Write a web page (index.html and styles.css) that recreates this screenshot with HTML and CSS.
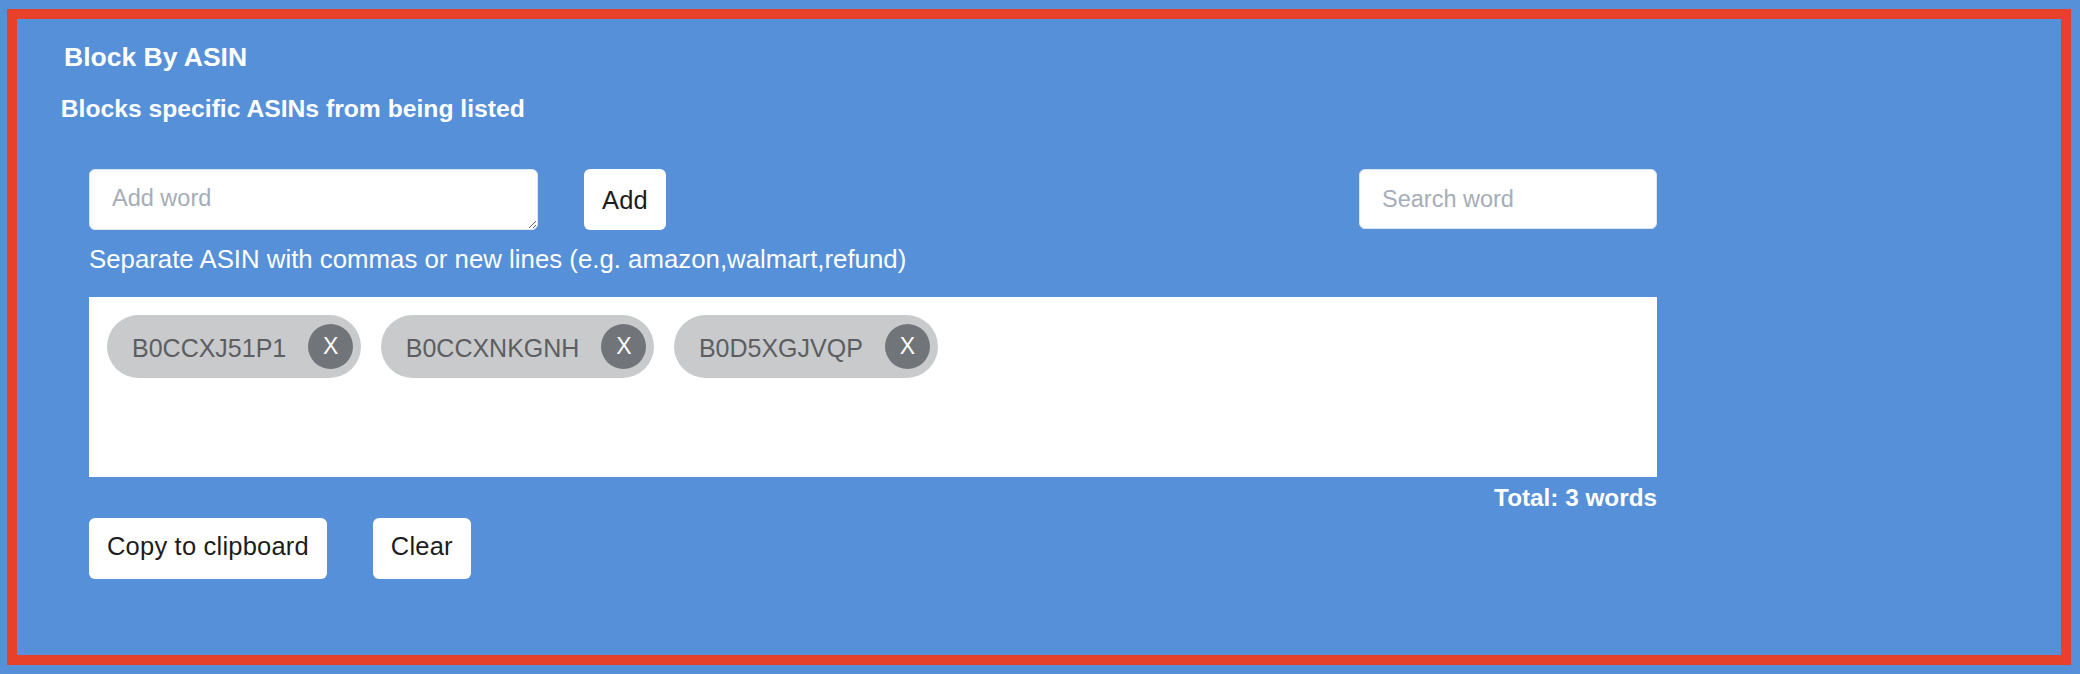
FILE: index.html
```html
<!DOCTYPE html>
<html lang="en">
<head>
<meta charset="utf-8">
<title>Block By ASIN</title>
<link rel="stylesheet" href="styles.css">
</head>
<body>
<section class="panel">
  <h2 class="panel-title">Block By ASIN</h2>
  <p class="panel-desc">Blocks specific ASINs from being listed</p>
  <div class="content">
    <div class="input-row">
      <div class="add-group">
        <textarea class="add-input" placeholder="Add word"></textarea>
        <button class="btn">Add</button>
      </div>
      <input class="search-input" type="text" placeholder="Search word">
    </div>
    <p class="hint">Separate ASIN with commas or new lines (e.g. amazon,walmart,refund)</p>
    <div class="word-list">
      <span class="chip"><span class="chip-text">B0CCXJ51P1</span><span class="chip-close">X</span></span>
      <span class="chip"><span class="chip-text">B0CCXNKGNH</span><span class="chip-close">X</span></span>
      <span class="chip"><span class="chip-text">B0D5XGJVQP</span><span class="chip-close">X</span></span>
    </div>
    <div class="total">Total: 3 words</div>
    <div class="actions">
      <button class="btn">Copy to clipboard</button>
      <button class="btn">Clear</button>
    </div>
  </div>
</section>
</body>
</html>
```

FILE: styles.css
```css
html, body {
  margin: 0;
  background: #5590d8;
}
body {
  padding: 9px 9px 0 7px;
  font-family: "Liberation Sans", Arial, Helvetica, sans-serif;
  color: #ffffff;
}
.panel {
  border: 10px solid #e8412a;
  padding: 22.5px 0 76px 0;
}
.panel-title {
  margin: 0 0 22px 47px;
  font-size: 26.5px;
  line-height: 30px;
  font-weight: 700;
}
.panel-desc {
  margin: 0 0 45.5px 43.7px;
  font-size: 24.7px;
  line-height: 30px;
  font-weight: 700;
}
.content {
  margin-left: 72px;
  width: 1568px;
}
.input-row {
  display: flex;
  justify-content: space-between;
  align-items: flex-start;
}
.add-group {
  display: flex;
  gap: 46px;
  align-items: flex-start;
}
.add-input {
  box-sizing: border-box;
  width: 449px;
  height: 61px;
  padding: 15px 22px 11px;
  border: 1px solid #dfe5ec;
  border-radius: 6px;
  font-family: "Liberation Sans", Arial, sans-serif;
  font-size: 23.5px;
  color: #222;
  background: #fff;
  resize: both;
  display: block;
  margin: 0;
}
.add-input::placeholder,
.search-input::placeholder {
  color: #a5adb9;
}
.search-input {
  box-sizing: border-box;
  width: 298px;
  height: 60px;
  padding: 0 22px;
  border: 1px solid #dfe5ec;
  border-radius: 6px;
  font-family: "Liberation Sans", Arial, sans-serif;
  font-size: 23.5px;
  color: #222;
  background: #fff;
  margin: 0;
}
.btn {
  box-sizing: border-box;
  height: 61px;
  padding: 0 18px;
  border: none;
  border-radius: 6px;
  background: #ffffff;
  color: #1c1c1c;
  font-family: "Liberation Sans", Arial, sans-serif;
  font-size: 25.5px;
  line-height: 30px;
  letter-spacing: 0.2px;
  margin: 0;
}
.hint {
  margin: 14px 0 23px 0;
  font-size: 25.8px;
  line-height: 30px;
}
.word-list {
  box-sizing: border-box;
  height: 180px;
  background: #ffffff;
  padding: 18px;
  display: flex;
  flex-wrap: wrap;
  align-content: flex-start;
  gap: 19.5px;
}
.chip {
  display: inline-flex;
  align-items: center;
  height: 63px;
  box-sizing: border-box;
  padding: 0 8px 0 25px;
  border-radius: 32px;
  background: #c9cacc;
  gap: 22px;
}
.chip-text {
  font-size: 25px;
  line-height: 30px;
  color: #5c5e62;
  padding-top: 3px;
}
.chip-close {
  width: 45px;
  height: 45px;
  border-radius: 50%;
  background: #717479;
  color: #ffffff;
  font-size: 23px;
  line-height: 45px;
  text-align: center;
}
.total {
  margin-top: 6px;
  text-align: right;
  font-size: 24.3px;
  line-height: 30px;
  font-weight: 700;
}
.actions {
  margin-top: 5px;
  display: flex;
  gap: 46px;
}
.actions .btn {
  padding-bottom: 6px;
}
```
